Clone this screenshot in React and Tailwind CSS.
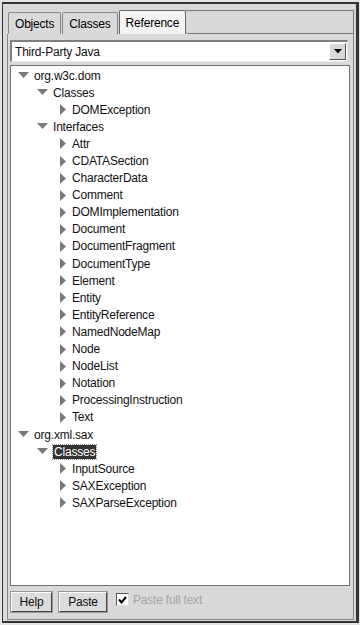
import React from 'react';

const font = { fontFamily: '"Liberation Sans", Arial, sans-serif' };

const tree = [
  { label: 'org.w3c.dom', level: 0, open: true },
  { label: 'Classes', level: 1, open: true },
  { label: 'DOMException', level: 2 },
  { label: 'Interfaces', level: 1, open: true },
  { label: 'Attr', level: 2 },
  { label: 'CDATASection', level: 2 },
  { label: 'CharacterData', level: 2 },
  { label: 'Comment', level: 2 },
  { label: 'DOMImplementation', level: 2 },
  { label: 'Document', level: 2 },
  { label: 'DocumentFragment', level: 2 },
  { label: 'DocumentType', level: 2 },
  { label: 'Element', level: 2 },
  { label: 'Entity', level: 2 },
  { label: 'EntityReference', level: 2 },
  { label: 'NamedNodeMap', level: 2 },
  { label: 'Node', level: 2 },
  { label: 'NodeList', level: 2 },
  { label: 'Notation', level: 2 },
  { label: 'ProcessingInstruction', level: 2 },
  { label: 'Text', level: 2 },
  { label: 'org.xml.sax', level: 0, open: true },
  { label: 'Classes', level: 1, open: true, selected: true },
  { label: 'InputSource', level: 2 },
  { label: 'SAXException', level: 2 },
  { label: 'SAXParseException', level: 2 },
];

const indent = ['pl-[7px]', 'pl-[26px]', 'pl-[49px]'];

const Arrow = ({ open }) =>
  open ? (
    <svg width="12" height="7" viewBox="0 0 12 7" className="shrink-0">
      <polygon points="0,0 11,0 5.5,6" fill="#7a7a7a" />
    </svg>
  ) : (
    <svg width="7" height="11" viewBox="0 0 7 11" className="shrink-0">
      <polygon points="0,0 6,5.5 0,11" fill="#7a7a7a" />
    </svg>
  );

const Row = ({ item }) => (
  <div className={`h-[17.1px] flex items-center ${indent[item.level]}`}>
    <div className={item.open ? 'w-[16px] flex' : 'w-[12px] flex'}>
      <Arrow open={item.open} />
    </div>
    {item.selected ? (
      <span className="bg-[#333] text-white px-[1px] leading-[14px] outline outline-1 outline-dotted outline-[#999]">
        {item.label}
      </span>
    ) : (
      <span className="text-[#111]">{item.label}</span>
    )}
  </div>
);

export default function App() {
  return (
    <div style={font} className="w-[360px] h-[625px] bg-[#e4e4e4] pl-[2px] pt-[2px] text-[12px] tracking-[-0.2px] overflow-hidden">
      <div className="w-[357px] h-[621px] border-l border-t-2 border-r-[3px] border-b-2 border-[#333] bg-[#d9d9d9]">
        <div className="h-full border-l-[4px] border-[#d9d9d9] pr-[2px] pb-[1px] flex flex-col">
          {/* Tabs */}
          <div className="h-[30px] pt-[6px] flex items-end pl-[1px]">
            <div className="h-[22px] px-[6px] flex items-center border-t border-l border-r border-[#888] bg-[#d9d9d9] rounded-t-[2px]">Objects</div>
            <div className="h-[22px] ml-[1px] px-[6px] flex items-center border-t border-l border-r border-[#888] bg-[#d9d9d9] rounded-t-[2px]">Classes</div>
            <div className="h-[24px] ml-[1px] px-[6px] flex items-center border-t border-l border-r border-[#666] bg-[#f4f4f4] rounded-t-[2px]">Reference</div>
            <div className="flex-1 h-[24px] border-t border-r border-b border-[#777] bg-[#d9d9d9] rounded-bl-[3px]" />
          </div>

          {/* Tab page */}
          <div className="flex-1 border-l border-r border-b border-[#888] flex flex-col px-[2px] pt-[6px]">
            {/* Dropdown */}
            <div className="h-[22px] mr-[3px] flex items-center bg-white border-t-2 border-l-2 border-[#808080] border-b border-r border-b-[#e8e8e8] border-r-[#e8e8e8]">
              <span className="flex-1 pl-[3px] text-[#111]">Third-Party Java</span>
              <div className="w-[17px] h-[17px] mr-[1px] bg-[#d9d9d9] border border-t-white border-l-white border-b-[#555] border-r-[#555] flex items-center justify-center">
                <svg width="8" height="5" viewBox="0 0 8 5">
                  <polygon points="0,0 8,0 4,4.5" fill="#000" />
                </svg>
              </div>
            </div>

            {/* Tree */}
            <div className="mt-[3px] mr-[1px] h-[521px] bg-white border border-[#707070] pt-[1px]">
              {tree.map((item, i) => (
                <Row key={i} item={item} />
              ))}
            </div>

            {/* Buttons */}
            <div className="flex items-center mt-[6px] pl-[1px]">
              <button className="h-[20px] w-[41px] bg-[#dcdcdc] border border-t-white border-l-white border-b-[#444] border-r-[#444] outline outline-1 outline-[#999] text-[#111]">
                Help
              </button>
              <button className="h-[20px] w-[48px] ml-[7px] bg-[#dcdcdc] border border-t-white border-l-white border-b-[#444] border-r-[#444] outline outline-1 outline-[#999] text-[#111]">
                Paste
              </button>
              <div className="ml-[9px] flex items-center -mt-[5px]">
                <div className="w-[13px] h-[13px] bg-white border-t border-l border-[#555] border-b border-r border-b-[#ddd] border-r-[#ddd] flex items-center justify-center">
                  <svg width="9" height="8" viewBox="0 0 9 8">
                    <polyline points="1,3.5 3.5,6.5 8,1" fill="none" stroke="#000" strokeWidth="2" />
                  </svg>
                </div>
                <span className="ml-[4px] text-[#a6a6a6]">Paste full text</span>
              </div>
            </div>
          </div>
        </div>
      </div>
    </div>
  );
}
